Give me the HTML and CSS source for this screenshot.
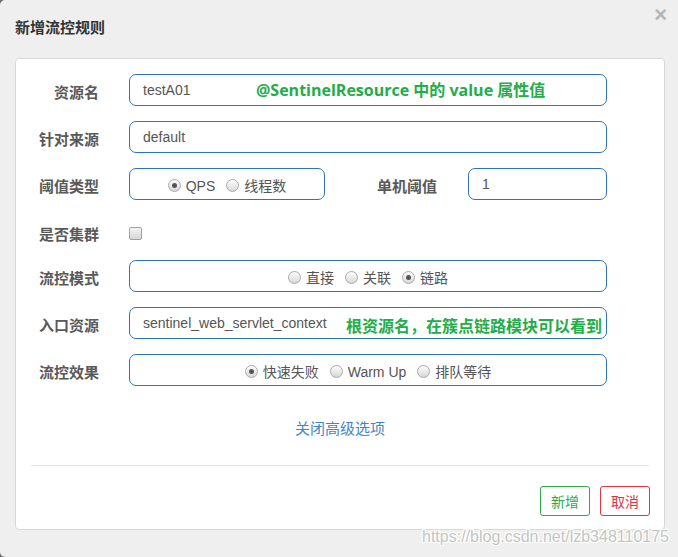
FILE: index.html
```html
<!DOCTYPE html>
<html lang="zh-CN">
<head>
<meta charset="utf-8">
<title>新增流控规则</title>
<link rel="stylesheet" href="styles.css">
</head>
<body>
<div class="dialog">
  <div class="dialog-header">
    <h3 class="dialog-title">新增流控规则</h3>
    <span class="close">×</span>
  </div>
  <div class="card">
    <div class="form">
      <div class="row">
        <label class="lbl">资源名</label>
        <div class="field wide">
          <span class="val">testA01</span>
          <span class="note note-1">@SentinelResource 中的 value 属性值</span>
        </div>
      </div>
      <div class="row">
        <label class="lbl">针对来源</label>
        <div class="field wide"><span class="val">default</span></div>
      </div>
      <div class="row">
        <label class="lbl">阈值类型</label>
        <div class="field radios narrow">
          <span class="radio on"></span><span class="rtext">QPS</span>
          <span class="radio"></span><span class="rtext">线程数</span>
        </div>
        <label class="lbl lbl-mid">单机阈值</label>
        <div class="field small"><span class="val">1</span></div>
      </div>
      <div class="row row-check">
        <label class="lbl">是否集群</label>
        <span class="checkbox"></span>
      </div>
      <div class="row">
        <label class="lbl">流控模式</label>
        <div class="field radios wide">
          <span class="radio"></span><span class="rtext">直接</span>
          <span class="radio"></span><span class="rtext">关联</span>
          <span class="radio on"></span><span class="rtext">链路</span>
        </div>
      </div>
      <div class="row">
        <label class="lbl">入口资源</label>
        <div class="field wide">
          <span class="val">sentinel_web_servlet_context</span>
          <span class="note note-2">根资源名，在簇点链路模块可以看到</span>
        </div>
      </div>
      <div class="row">
        <label class="lbl">流控效果</label>
        <div class="field radios wide">
          <span class="radio on"></span><span class="rtext">快速失败</span>
          <span class="radio"></span><span class="rtext">Warm Up</span>
          <span class="radio"></span><span class="rtext">排队等待</span>
        </div>
      </div>
    </div>
    <div class="advanced"><a class="link">关闭高级选项</a></div>
    <div class="divider"></div>
    <div class="actions">
      <button class="btn btn-green">新增</button>
      <button class="btn btn-red">取消</button>
    </div>
  </div>
  <div class="watermark">https://blog.csdn.net/lzb348110175</div>
</div>
</body>
</html>
```
FILE: styles.css
```css
html {
  background: #6b6b6b;
}
body {
  margin: 0;
  font-family: "Noto Sans CJK SC", "Liberation Sans", sans-serif;
}
.dialog {
  position: relative;
  width: 678px;
  height: 557px;
  background: #efefef;
  border-radius: 5px 0 0 5px;
  box-sizing: border-box;
  overflow: hidden;
}
.dialog-header {
  display: flex;
  justify-content: space-between;
  align-items: flex-start;
  height: 58px;
  padding: 0 11px 0 15px;
  box-sizing: border-box;
}
.dialog-title {
  margin: 16px 0 0;
  font-size: 15px;
  line-height: 22px;
  font-weight: bold;
  color: #333;
}
.close {
  margin-top: 3px;
  font-family: "Liberation Sans", sans-serif;
  font-size: 22px;
  line-height: 24px;
  font-weight: bold;
  color: #b5b5b5;
}
.card {
  margin: 0 13px 0 15px;
  background: #fff;
  border: 1px solid #d9d9d9;
  border-radius: 4px;
  padding: 15px 0 14px;
  height: 472px;
  box-sizing: border-box;
}
.form {
  display: flex;
  flex-direction: column;
  gap: 15px;
}
.row {
  display: flex;
  align-items: flex-start;
  height: 32px;
}
.lbl {
  width: 83px;
  flex: none;
  margin-right: 30px;
  padding-top: 7px;
  text-align: right;
  font-size: 15px;
  line-height: 22px;
  font-weight: bold;
  color: #595959;
}
.lbl-mid {
  width: 112px;
  margin-right: 31px;
}
.field {
  position: relative;
  height: 32px;
  box-sizing: border-box;
  border: 1px solid #3074b5;
  border-radius: 7px;
  display: flex;
  align-items: center;
  padding: 0 13px;
  font-family: "Liberation Sans", "Noto Sans CJK SC", sans-serif;
  font-size: 14px;
  color: #555;
}
.wide { width: 478px; }
.narrow { width: 196px; }
.small { width: 139px; }
.val {
  line-height: 20px;
}
.radios {
  justify-content: center;
  padding-top: 3px;
}
.radio {
  width: 11px;
  height: 11px;
  border: 1px solid #aaa;
  border-radius: 50%;
  background: linear-gradient(#fdfdfd, #d8d8d8);
  position: relative;
  margin-right: 5px;
  flex: none;
}
.radio.on::after {
  content: "";
  position: absolute;
  left: 3px;
  top: 3px;
  width: 5px;
  height: 5px;
  border-radius: 50%;
  background: #555;
}
.rtext {
  margin-right: 11px;
  line-height: 20px;
}
.rtext:last-child {
  margin-right: 0;
}
.row-check {
  height: 30px;
}
.row-check .lbl {
  padding-top: 8px;
}
.checkbox {
  margin-top: 12px;
  width: 11px;
  height: 11px;
  border: 1px solid #a3a3a3;
  border-radius: 2px;
  background: linear-gradient(#f4f4f4, #d6d6d6);
}
.note {
  position: absolute;
  top: 50%;
  transform: translateY(-50%);
  font-family: "Open Sans", "Noto Sans CJK SC", sans-serif;
  font-size: 16px;
  font-weight: bold;
  color: #21ad4a;
  white-space: nowrap;
  line-height: 22px;
}
.note-1 {
  left: 126px;
}
.note-2 {
  left: 216px;
  font-family: "Noto Sans CJK SC", sans-serif;
  margin-top: 2px;
}
.advanced {
  margin-top: 31px;
  text-align: center;
  line-height: 20px;
}
.link {
  font-size: 15px;
  color: #3f86c8;
  cursor: pointer;
}
.divider {
  margin: 27px 15px 0 15px;
  height: 1px;
  background: #e3e3e3;
}
.actions {
  display: flex;
  justify-content: flex-end;
  gap: 10px;
  margin: 20px 14px 0 0;
}
.btn {
  width: 50px;
  height: 30px;
  background: #fff;
  border-radius: 3px;
  font-family: "Noto Sans CJK SC", sans-serif;
  font-size: 14px;
  padding: 0;
  cursor: pointer;
}
.btn-green {
  border: 1px solid #2ea84d;
  color: #2ea84d;
}
.btn-red {
  border: 1px solid #dc3545;
  color: #dc3545;
}
.watermark {
  position: absolute;
  right: 9px;
  top: 527px;
  font-family: "Liberation Sans", sans-serif;
  font-size: 16px;
  line-height: 20px;
  color: #c4c4c4;
  text-shadow: 1px 1px 0 #fff, -1px -1px 0 #fff, 1px -1px 0 #fff, -1px 1px 0 #fff;
}
```
